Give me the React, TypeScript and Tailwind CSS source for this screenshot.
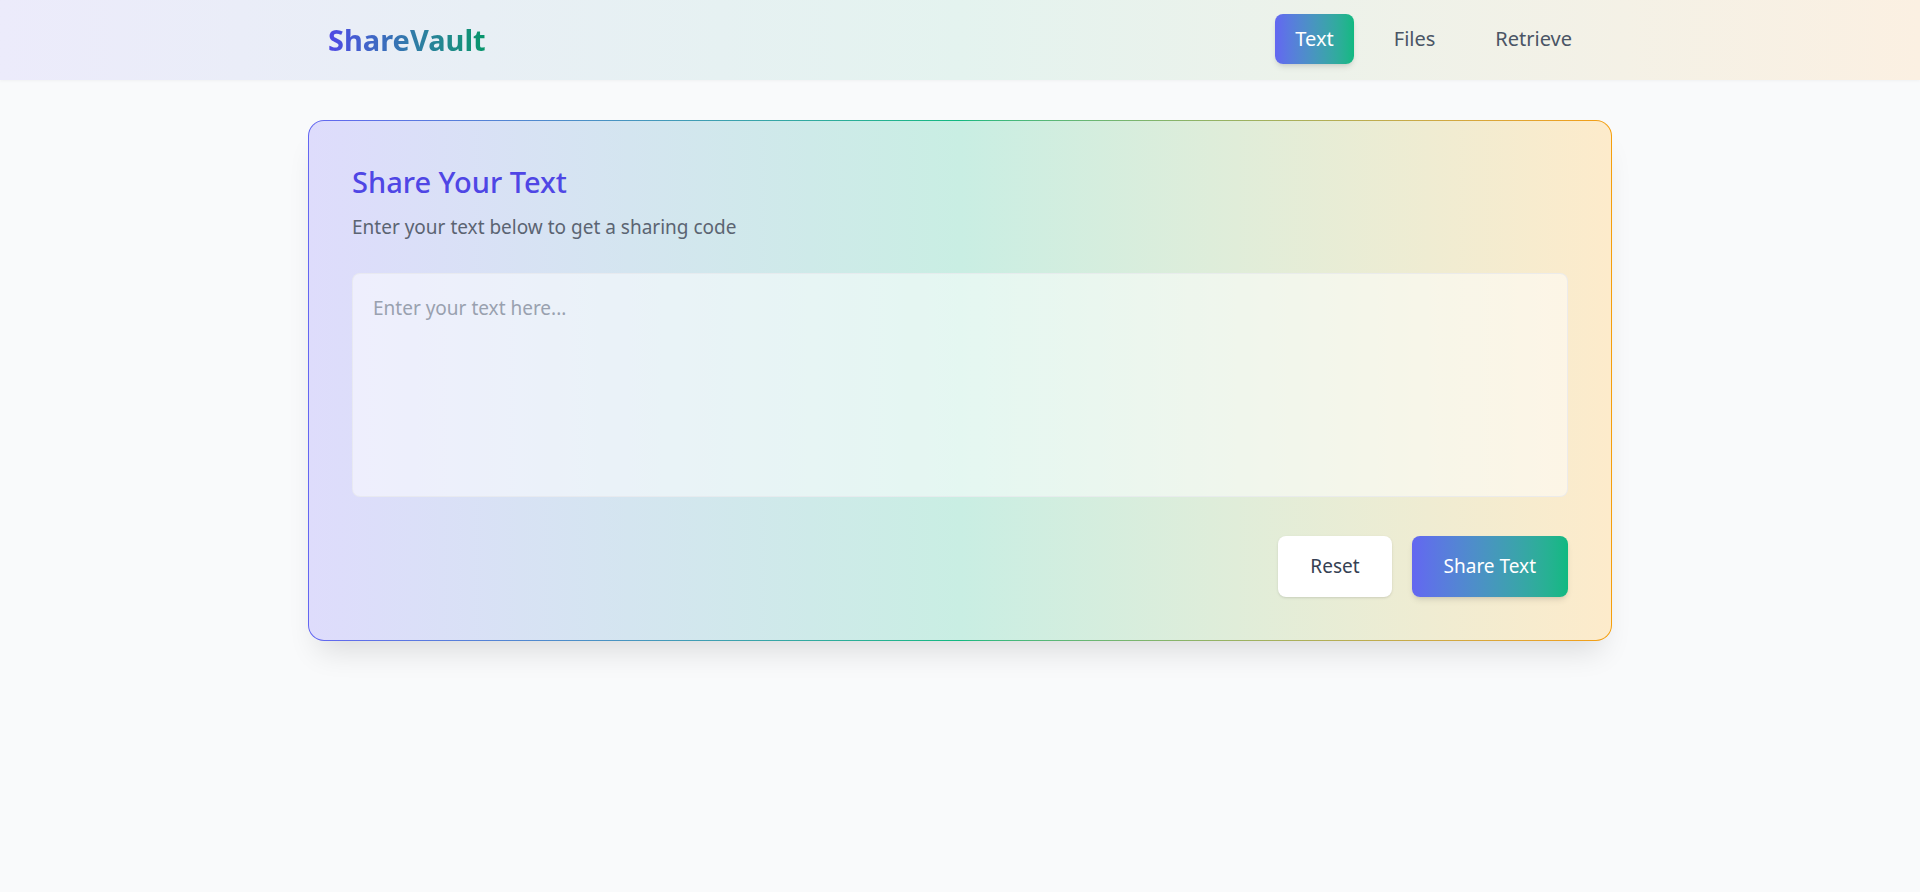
import { useState } from "react";

const tabs = ["Text", "Files", "Retrieve"];

const App = () => {
  const [active, setActive] = useState("Text");
  const [text, setText] = useState("");

  return (
    <div className="min-h-screen bg-[#f9fafb] font-['Noto_Sans',sans-serif]">
      {/* header */}
      <header className="h-20 bg-gradient-to-r from-[#ecebfb] via-[#e4f3ef] to-[#fbf0e2] shadow-[0_1px_3px_rgba(0,0,0,0.04)]">
        <div className="max-w-[1280px] mx-auto px-2 h-full flex items-center justify-between">
          <span className="text-[29px] font-bold bg-gradient-to-r from-[#4f46e5] to-[#059669] bg-clip-text text-transparent">
            ShareVault
          </span>
          <nav className="flex items-center gap-5 -mt-0.5">
            {tabs.map((t) => (
              <button
                key={t}
                onClick={() => setActive(t)}
                className={
                  active === t
                    ? "h-[50px] px-5 rounded-lg text-xl text-white bg-gradient-to-r from-[#6366f1] to-[#10b981] shadow-md"
                    : "h-[50px] px-5 rounded-lg text-xl text-gray-600"
                }
              >
                {t}
              </button>
            ))}
          </nav>
        </div>
      </header>

      {/* card */}
      <main className="flex justify-center pt-10">
        <div className="w-[1304px] rounded-2xl p-px bg-gradient-to-r from-[#6366f1] via-[#10b981] to-[#f59e0b] shadow-[0_20px_30px_-10px_rgba(0,0,0,0.12)]">
          <div className="rounded-[15px] bg-gradient-to-r from-[#dedcfc] via-[#c9eee3] to-[#fdebcb] px-[43px] pt-[43px] pb-[43px]">
            <h2 className="text-[29px] leading-9 font-medium text-[#4f46e5]">Share Your Text</h2>
            <p className="mt-[13px] text-[19px] leading-7 text-[#5b6472]">Enter your text below to get a sharing code</p>
            <textarea
              value={text}
              onChange={(e) => setText(e.target.value)}
              placeholder="Enter your text here..."
              className="mt-8 block w-full h-[224px] resize-none rounded-lg bg-white/50 border border-gray-200/70 px-5 py-5 text-[19px] text-gray-700 placeholder:text-gray-400 outline-none"
            />
            <div className="mt-[39px] flex justify-end gap-5">
              <button
                onClick={() => setText("")}
                className="h-[61px] px-8 rounded-lg bg-white text-[19px] text-gray-700 shadow-sm"
              >
                Reset
              </button>
              <button className="h-[61px] px-8 rounded-lg text-[19px] text-white bg-gradient-to-r from-[#6366f1] to-[#10b981] shadow-md">
                Share Text
              </button>
            </div>
          </div>
        </div>
      </main>
    </div>
  );
};

export default App;
